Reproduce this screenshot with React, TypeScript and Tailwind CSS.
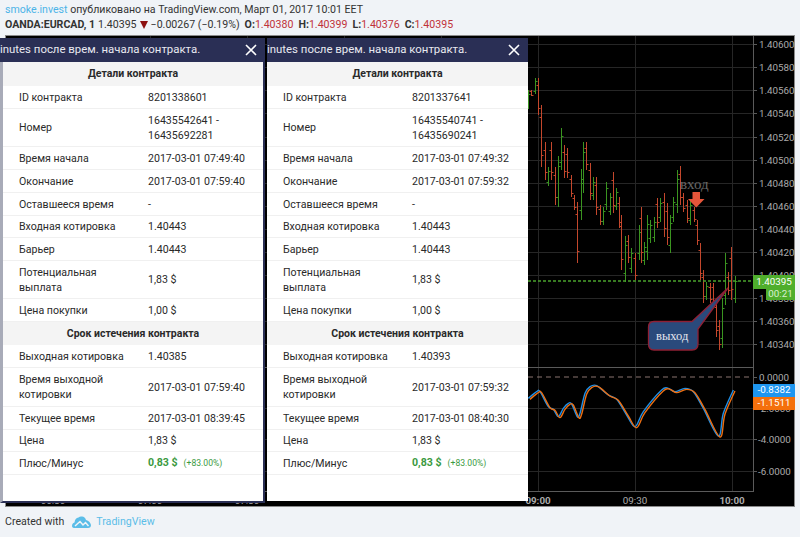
const FONT = "font-['Roboto','Liberation_Sans',sans-serif]";

type Bar = [number, number, number, "r" | "g"];
const bars: Bar[] = [
  [528, 90, 109, "g"], [531, 90, 96, "r"], [535, 78, 94, "g"], [538, 78, 115, "r"], [541, 105, 167, "r"],
  [545, 142, 180, "r"], [548, 167, 186, "g"], [551, 142, 180, "r"], [555, 167, 205, "r"], [558, 156, 207, "g"],
  [561, 128, 170, "g"], [564, 145, 178, "r"], [567, 148, 178, "r"], [571, 175, 197, "r"], [574, 195, 210, "r"],
  [577, 202, 263, "r"], [581, 169, 220, "g"], [583, 142, 193, "g"], [586, 142, 170, "r"], [590, 163, 200, "r"],
  [593, 177, 200, "g"], [596, 177, 215, "r"], [600, 205, 225, "r"], [603, 207, 225, "g"], [606, 182, 210, "g"],
  [610, 193, 215, "g"], [613, 172, 213, "r"], [616, 188, 210, "g"], [619, 197, 228, "r"], [621, 215, 270, "r"],
  [625, 236, 282, "g"], [628, 235, 263, "r"], [631, 248, 273, "g"], [635, 253, 280, "r"], [639, 225, 260, "g"],
  [641, 207, 263, "r"], [644, 242, 265, "g"], [647, 215, 260, "g"], [650, 220, 243, "g"], [654, 217, 242, "g"],
  [657, 198, 228, "r"], [660, 198, 222, "g"], [664, 193, 237, "r"], [667, 203, 245, "r"], [670, 215, 253, "g"],
  [673, 197, 222, "g"], [677, 170, 213, "g"], [680, 166, 205, "r"], [683, 193, 212, "r"], [687, 200, 223, "r"],
  [690, 200, 225, "g"], [694, 207, 222, "r"], [697, 220, 245, "r"], [700, 243, 280, "r"], [703, 270, 303, "r"],
  [706, 282, 300, "g"], [710, 283, 303, "r"], [713, 283, 305, "r"], [716, 300, 337, "r"], [719, 320, 350, "r"],
  [722, 298, 348, "g"], [725, 253, 305, "g"], [728, 272, 295, "r"], [731, 247, 300, "r"], [735, 276, 303, "g"],
];

const blue: [number, number][] = [[25,85],[50,65],[60,65],[85,110],[100,118],[115,140],[130,115],[145,100],[155,102],[172,140],[180,130],[195,70],[210,50],[230,47],[265,75],[290,88],[320,135],[345,170],[370,125],[425,60],[445,55],[465,65],[495,55],[520,65],[550,115],[595,198],[610,130],[640,60]];

function smooth(pts: [number, number][], dx: number, dy: number) {
  const p = pts.map(([x, y]) => [520 + x / 3 + dx, 370 + y / 3 + dy]);
  let d = `M${p[0][0]} ${p[0][1]}`;
  for (let i = 0; i < p.length - 1; i++) {
    const a = p[Math.max(0, i - 1)], b = p[i], c = p[i + 1], e = p[Math.min(p.length - 1, i + 2)];
    d += ` C${b[0] + (c[0] - a[0]) / 6} ${b[1] + (c[1] - a[1]) / 6} ${c[0] - (e[0] - b[0]) / 6} ${c[1] - (e[1] - b[1]) / 6} ${c[0]} ${c[1]}`;
  }
  return d;
}

const priceLabels = [
  ["1.40600", 44], ["1.40580", 67], ["1.40560", 90], ["1.40540", 113], ["1.40520", 137], ["1.40500", 160],
  ["1.40480", 183], ["1.40460", 206], ["1.40440", 229], ["1.40420", 252], ["1.40400", 275], ["1.40380", 298],
  ["1.40360", 321], ["1.40340", 344],
] as const;
const indLabels = [["0.0000", 377], ["-2.0000", 408], ["-4.0000", 439], ["-6.0000", 471]] as const;

function Chart() {
  return (
    <svg viewBox="0 0 800 537" width={800} height={537} className="absolute left-[-6px] top-[-36px]">
      <g stroke="#262626" strokeWidth="1">
        {[538, 635, 732, 150, 247, 344, 441].map((x) => (
          <line key={x} x1={x + 0.5} x2={x + 0.5} y1={36} y2={492} />
        ))}
        {priceLabels.map(([, y]) => (
          <line key={y} x1={6} x2={753} y1={y + 0.5} y2={y + 0.5} />
        ))}
        {indLabels.slice(1).map(([, y]) => (
          <line key={y} x1={6} x2={753} y1={y + 0.5} y2={y + 0.5} />
        ))}
      </g>
      {bars.map(([x, hi, lo, c]) => {
        const col = c === "r" ? "#c4472c" : "#3a9420";
        const h = lo - hi;
        const o = c === "r" ? hi + h * 0.2 : lo - h * 0.2;
        const cl = c === "r" ? lo - h * 0.2 : hi + h * 0.2;
        const X = x + 0.5;
        return (
          <g key={x} stroke={col} strokeWidth="1">
            <line x1={X} x2={X} y1={hi} y2={lo} />
            <line x1={X - 2} x2={X} y1={Math.round(o) + 0.5} y2={Math.round(o) + 0.5} />
            <line x1={X} x2={X + 2} y1={Math.round(cl) + 0.5} y2={Math.round(cl) + 0.5} />
          </g>
        );
      })}
      <line x1={528} x2={753} y1={281} y2={281} stroke="#4aa32c" strokeWidth="1.5" strokeDasharray="3 2" />
      <line x1={528} x2={753} y1={377} y2={377} stroke="#8a7570" strokeWidth="1" strokeDasharray="5 4" />
      <g stroke="#5a5a5a" strokeWidth="1">
        <line x1={753.5} x2={753.5} y1={36} y2={492} />
        <line x1={6} x2={753} y1={367.5} y2={367.5} />
        <line x1={6} x2={753} y1={491.5} y2={491.5} />
        {priceLabels.map(([, y]) => (
          <line key={y} x1={753} x2={757} y1={y + 0.5} y2={y + 0.5} />
        ))}
        {indLabels.map(([, y]) => (
          <line key={y} x1={753} x2={757} y1={y + 0.5} y2={y + 0.5} />
        ))}
      </g>
      <g fill="#ababab" fontFamily="Roboto, 'Liberation Sans', sans-serif" fontSize="9.8">
        {priceLabels.map(([t, y]) => (
          <text key={t} x={759} y={y + 3.5}>{t}</text>
        ))}
        {indLabels.map(([t, y]) => (
          <text key={t} x={t.startsWith("-") ? 758 : 759} y={y + 3.5}>{t}</text>
        ))}
        <text x={53} y={504} textAnchor="middle">06:30</text>
        <text x={150} y={504} textAnchor="middle">07:00</text>
        <text x={247} y={504} textAnchor="middle">07:30</text>
        <text x={635} y={504} textAnchor="middle">09:30</text>
        <text x={538} y={504} textAnchor="middle" fontWeight="700">09:00</text>
        <text x={732} y={504} textAnchor="middle" fontWeight="700">10:00</text>
      </g>
      <path d={smooth(blue, 0, 0)} fill="none" stroke="#1e8fe6" strokeWidth="1.4" />
      <path d={smooth(blue, 1.6, 1)} fill="none" stroke="#ee6f12" strokeWidth="1.4" />

      <text x={680} y={189} fill="#666" fontFamily="'Liberation Serif', serif" fontSize="15">вход</text>
      <path d="M692.5 192 h7.5 v7 h4.5 l-8.2 8.5 l-8.3 -8.5 h4.5 z" fill="#e5553a" />
      <path
        d="M654 321.5 H692 L728 288 L698 329 V344 Q698 350 692 350 H654 Q648.5 350 648.5 344 V327 Q648.5 321.5 654 321.5 Z"
        fill="#2a4a7c"
        stroke="#8f2035"
        strokeWidth="1.3"
      />
      <text x={656} y={340} fill="#e6e6ee" fontFamily="'Liberation Serif', serif" fontSize="12.5">выход</text>
    </svg>
  );
}

type Row = { k: string; v?: string; v2?: string; h: string; head?: boolean; pl?: boolean };

const rowsFor = (d: {
  id: string; n1: string; n2: string; start: string; end: string; exit: string; expEnd: string; now: string;
}): Row[] => [
  { k: "Детали контракта", head: true, h: "h-[24px]" },
  { k: "ID контракта", v: d.id, h: "h-[23px]" },
  { k: "Номер", v: d.n1, v2: d.n2, h: "h-[38px]" },
  { k: "Время начала", v: d.start, h: "h-[23px]" },
  { k: "Окончание", v: d.end, h: "h-[23px]" },
  { k: "Оставшееся время", v: "-", h: "h-[23px]" },
  { k: "Входная котировка", v: "1.40443", h: "h-[22px]" },
  { k: "Барьер", v: "1.40443", h: "h-[23px]" },
  { k: "Потенциальная выплата", v: "1,83 $", h: "h-[38px]" },
  { k: "Цена покупки", v: "1,00 $", h: "h-[23px]" },
  { k: "Срок истечения контракта", head: true, h: "h-[23px]" },
  { k: "Выходная котировка", v: d.exit, h: "h-[23px]" },
  { k: "Время выходной котировки", v: d.expEnd, h: "h-[39px]" },
  { k: "Текущее время", v: d.now, h: "h-[23px]" },
  { k: "Цена", v: "1,83 $", h: "h-[22px]" },
  { k: "Плюс/Минус", pl: true, h: "h-[23px]" },
];

function Dialog({ rows, className, bodyClass }: { rows: Row[]; className: string; bodyClass: string }) {
  return (
    <div className={`absolute top-[2px] flex flex-col overflow-hidden ${className}`}>
      <div className="flex h-[24px] shrink-0 items-center justify-between bg-[#2a2f55] pr-[8px] text-[11.4px] text-[#e8e9f0]">
        <span className="whitespace-nowrap">inutes после врем. начала контракта.</span>
        <svg width="12" height="12" viewBox="0 0 12 12" className="shrink-0">
          <path d="M1 1 L11 11 M11 1 L1 11" stroke="#fff" strokeWidth="1.6" />
        </svg>
      </div>
      <div className={`flex flex-1 flex-col bg-white text-[10.6px] text-[#2a2a2a] ${bodyClass}`}>
        {rows.map((r) =>
          r.head ? (
            <div key={r.k} className={`flex shrink-0 items-center justify-center bg-[#f4f4f4] text-[10.5px] font-bold ${r.h}`}>
              {r.k}
            </div>
          ) : (
            <div
              key={r.k}
              className={`flex shrink-0 items-center border-b border-[#f0f0f0] leading-[15px] ${r.h}`}
            >
              <div className="w-[145px] shrink-0 pl-[16px] pr-[16px]">{r.k}</div>
              {r.pl ? (
                <div className="flex items-baseline gap-[6px] text-[#3b9a3f]">
                  <span className="font-bold">0,83 $</span>
                  <span className="text-[8.6px]">(+83.00%)</span>
                </div>
              ) : (
                <div>
                  <div>{r.v}</div>
                  {r.v2 && <div>{r.v2}</div>}
                </div>
              )}
            </div>
          )
        )}
      </div>
    </div>
  );
}

export default function App() {
  return (
    <div className={`flex h-[537px] w-[800px] flex-col overflow-hidden bg-[#f0f3f7] ${FONT}`}>
      <header className="h-[35px] shrink-0 pl-[5px] pt-[3px] text-[10.6px] leading-[14.5px] text-[#333]">
        <div className="whitespace-nowrap">
          <span className="text-[#4cb3e8]">smoke.invest</span> опубликовано на TradingView.com, Март 01, 2017 10:01 EET
        </div>
        <div className="flex items-center gap-[3px] whitespace-nowrap">
          <b>OANDA:EURCAD, 1</b>
          <span>1.40395</span>
          <svg width="8" height="8" viewBox="0 0 8 8"><path d="M0 0 H8 L4 8 Z" fill="#8c1010" /></svg>
          <span>−0.00267 (−0.19%)</span>
          <span className="ml-[2px]"><b>O:</b><span className="text-[#c0323a]">1.40380</span></span>
          <span className="ml-[2px]"><b>H:</b><span className="text-[#c0323a]">1.40399</span></span>
          <span className="ml-[2px]"><b>L:</b><span className="text-[#c0323a]">1.40376</span></span>
          <span className="ml-[2px]"><b>C:</b><span className="text-[#c0323a]">1.40395</span></span>
        </div>
      </header>
      <div className="relative mx-[5px] h-[472px] shrink-0 border border-[#8a8a8a] bg-black">
        <Chart />
        <div className="absolute left-[747px] top-[239px] flex h-[14px] w-[42px] items-center justify-center bg-[#4fae2c] text-[9.8px] text-white">1.40395</div>
        <div className="absolute left-[760px] top-[253px] flex h-[11px] w-[29px] items-center justify-center bg-[#4fae2c] text-[9.8px] text-[#d8f0d0]">00:21</div>
        <div className="absolute left-[747px] top-[348px] flex h-[13px] w-[42px] items-center justify-center bg-[#1e96f0] text-[9.8px] text-white">-0.8382</div>
        <div className="absolute left-[747px] top-[361px] flex h-[13px] w-[42px] items-center justify-center bg-[#f4700c] text-[9.8px] text-white">-1.1511</div>
        <Dialog
          className="left-[-6px] h-[465px] w-[265px]"
          bodyClass="border-l-[3px] border-r-[2px] border-b-[2px] border-l-[#a8abb8] border-r-[#2a2f55] border-b-[#2a2f55]"
          rows={rowsFor({ id: "8201338601", n1: "16435542641 -", n2: "16435692281", start: "2017-03-01 07:49:40", end: "2017-03-01 07:59:40", exit: "1.40385", expEnd: "2017-03-01 07:59:40", now: "2017-03-01 08:39:45" })}
        />
        <Dialog
          className="left-[261px] h-[463px] w-[261px]"
          bodyClass=""
          rows={rowsFor({ id: "8201337641", n1: "16435540741 -", n2: "16435690241", start: "2017-03-01 07:49:32", end: "2017-03-01 07:59:32", exit: "1.40393", expEnd: "2017-03-01 07:59:32", now: "2017-03-01 08:40:30" })}
        />
      </div>
      <footer className="flex flex-1 items-center pl-[5px] text-[10.6px] text-[#333]">
        <span>Created with</span>
        <svg width="19" height="12" viewBox="0 0 19 12" className="ml-[8px]">
          <path d="M0 10 Q0 7 2.5 6.5 Q3 2 6.5 1.5 Q8 0 10 0.5 Q13 0.5 14 4 Q18 5 19 9 Q19 12 16 12 H3 Q0 12 0 10 Z" fill="#5bbde8" />
          <path d="M3 10 L8 5.5 L11 9 L13.5 6.5 L16.5 10" fill="none" stroke="#f0f3f7" strokeWidth="1.5" />
        </svg>
        <span className="ml-[5px] text-[#5bbde8]">TradingView</span>
      </footer>
    </div>
  );
}
